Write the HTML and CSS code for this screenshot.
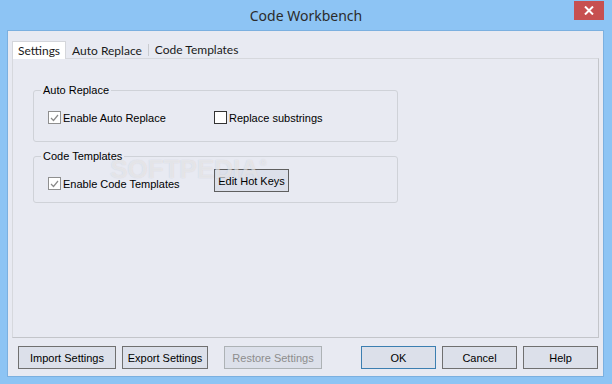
FILE: index.html
```html
<!DOCTYPE html>
<html lang="en">
<head>
    <meta charset="UTF-8">
    <title>Code Workbench</title>
    <link rel="stylesheet" href="styles.css">
</head>
<body>

    <div class="window">
        <div class="titlebar">
            <span></span>
            <span class="title">Code Workbench</span>
            <div class="close">
                <svg width="10" height="9" viewBox="0 0 10 9"><path d="M1 0.5 L9 8.5 M9 0.5 L1 8.5" stroke="#fff" stroke-width="2"/></svg>
            </div>
        </div>

        <div class="client">
            <div class="tabs">
                <div class="tab active">Settings</div>
                <div class="tab">Auto Replace</div>
                <div class="tab sep">Code Templates</div>
            </div>

            <div class="page">
                <fieldset class="group first">
                    <legend>Auto Replace</legend>
                    <div class="row">
                        <label class="check"><span class="box checked"><svg width="9" height="8" viewBox="0 0 9 8"><path d="M1 4 L3.5 6.5 L8 1" fill="none" stroke="#8a8a8a" stroke-width="1.2"/></svg></span>Enable Auto Replace</label>
                        <label class="check"><span class="box"></span>Replace substrings</label>
                    </div>
                </fieldset>

                <fieldset class="group second">
                    <legend>Code Templates</legend>
                    <div class="row">
                        <label class="check low"><span class="box checked"><svg width="9" height="8" viewBox="0 0 9 8"><path d="M1 4 L3.5 6.5 L8 1" fill="none" stroke="#8a8a8a" stroke-width="1.2"/></svg></span>Enable Code Templates</label>
                        <button class="btn hotkeys">Edit Hot Keys</button>
                    </div>
                </fieldset>

                <!-- watermark sits over the form -->
                <div class="watermark">SOFTPEDIA<sup>®</sup></div>
            </div>

            <div class="buttons">
                <button class="btn import">Import Settings</button>
                <button class="btn export">Export Settings</button>
                <button class="btn restore" disabled>Restore Settings</button>
                <button class="btn small ok">OK</button>
                <button class="btn small">Cancel</button>
                <button class="btn small">Help</button>
            </div>
        </div>
    </div>

</body>
</html>
```

FILE: styles.css
```css
* {
    box-sizing: border-box;
}
body {
    margin: 0;
    padding: 0;
    font-family: "Liberation Sans", Arial, sans-serif;
    font-size: 11px;
    color: #000;
}
.window {
    width: 612px;
    height: 384px;
    background: #8dc4f4;
    display: flex;
    flex-direction: column;
}
.titlebar {
    height: 30px;
    flex: none;
    display: grid;
    grid-template-columns: 1fr auto 1fr;
}
.title {
    font-family: "Noto Sans", "Open Sans", sans-serif;
    font-size: 14px;
    color: #2b2b2b;
    line-height: 32px;
}
.close {
    justify-self: end;
    width: 30px;
    height: 19px;
    margin: 1px 8px 0 0;
    background: #c75050;
    display: flex;
    align-items: center;
    justify-content: center;
}
.client {
    margin: 0 8px 7px 7px;
    flex: 1;
    background: #e8eaf2;
    border: 1px solid #7bb0e0;
    padding: 10px 4px 0 4px;
    display: flex;
    flex-direction: column;
}
.tabs {
    display: flex;
    height: 17px;
    flex: none;
    font-family: Lato, "Noto Sans", sans-serif;
    font-size: 12px;
    color: #1a1a1a;
    position: relative;
    z-index: 1;
}
.tab {
    padding: 0 6px;
    line-height: 17px;
    margin-top: 1px;
}
.tab.active {
    background: #fff;
    border: 1px solid #d4d6db;
    border-bottom: none;
    margin-top: 0;
    height: 18px;
    padding: 0 5px;
}
.tab.sep {
    border-left: 1px solid #c9cbd0;
    height: 12px;
    margin-top: 3px;
    line-height: 12px;
}
.page {
    position: relative;
    height: 280px;
    flex: none;
    border: 1px solid #d6d8dd;
    border-right-color: #c3c5ca;
    border-bottom-color: #c3c5ca;
    padding: 25px 0 0 20px;
}
.group {
    width: 365px;
    margin: 0;
    border: 1px solid #cfd2d8;
    border-radius: 3px;
    padding: 0 0 0 14px;
}
.group legend {
    font-size: 11px;
    line-height: 13px;
    padding: 0 2px;
    margin-left: -7px;
    color: #000;
}
.group.first {
    padding-top: 14px;
    padding-bottom: 17px;
}
.group.second {
    margin-top: 8px;
    padding-top: 6px;
    padding-bottom: 10px;
}
.row {
    display: grid;
    grid-template-columns: 166px auto;
    align-items: start;
}
.check {
    display: flex;
    align-items: center;
    height: 13px;
    gap: 2px;
}
.check.low {
    margin-top: 8px;
}
.box {
    width: 13px;
    height: 13px;
    border: 1px solid #333;
    background: #fff;
    display: flex;
    align-items: center;
    justify-content: center;
}
.box.checked {
    border-color: #8f8f8f;
}
.btn {
    font-family: "Liberation Sans", Arial, sans-serif;
    font-size: 11px;
    color: #000;
    height: 23px;
    padding: 0;
    background: #dce0ea;
    border: 1px solid #707070;
}
.hotkeys {
    width: 75px;
    justify-self: start;
    border-color: #5f5f5f;
}
.watermark {
    position: absolute;
    left: 97px;
    top: 91px;
    font-size: 26px;
    line-height: 26px;
    font-weight: bold;
    color: rgba(255, 255, 255, 0.5);
    text-shadow: 0 0 1px rgba(140, 140, 150, 0.35);
    pointer-events: none;
}
.watermark sup {
    font-size: 9px;
    vertical-align: 12px;
    margin-left: 1px;
}
.buttons {
    display: flex;
    flex: none;
    margin: 8px 0 0 6px;
}
.import {
    width: 98px;
}
.export {
    width: 86px;
    margin-left: 6px;
}
.restore {
    width: 98px;
    margin-left: 16px;
    color: #8d8d8d;
    border-color: #adb2b5;
}
.small {
    width: 75px;
    margin-left: 6px;
}
.ok {
    margin-left: 39px;
    border-color: #3c7fb1;
}
```
